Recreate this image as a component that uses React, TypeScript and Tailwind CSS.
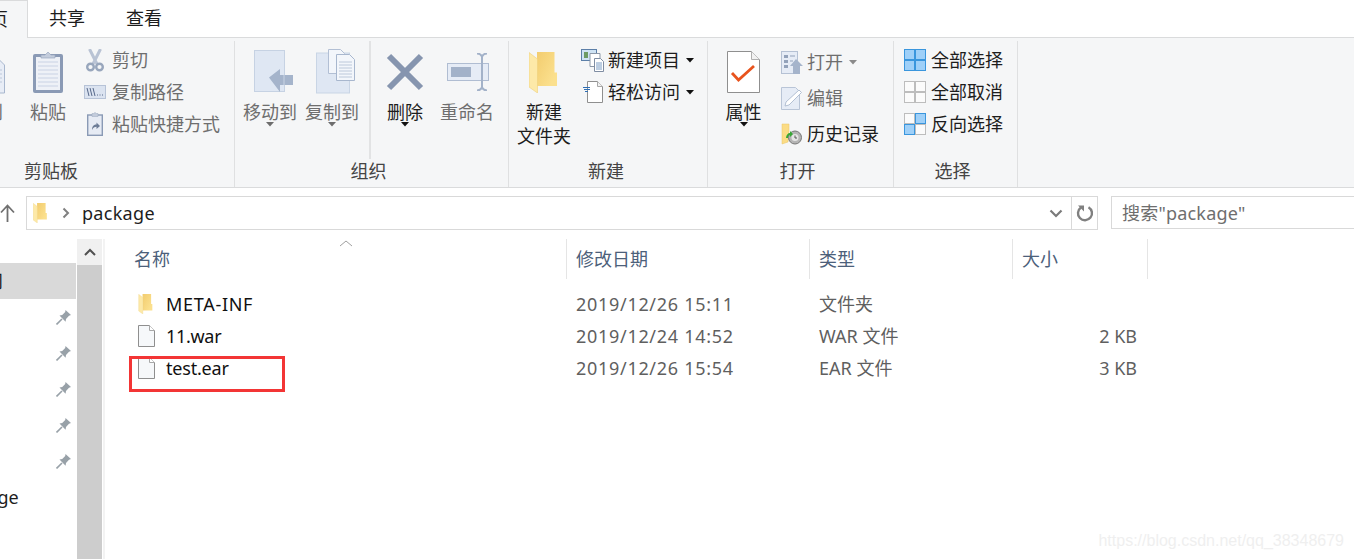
import { clsx } from 'clsx';

const FONT = '"Noto Sans","Noto Sans CJK SC",sans-serif';

const Caret = ({ color = '#6d6d6d' }: { color?: string }) => (
  <svg width="8" height="5" viewBox="0 0 8 5" className="block">
    <path d="M0 0h8L4 4.500z" fill={color} />
  </svg>
);

const FolderIcon = ({ w, h, id }: { w: number; h: number; id: string }) => (
  <svg width={w} height={h} viewBox="0 0 28 41" className="block">
    <defs>
      <linearGradient id={id} x1="0" y1="0" x2="1" y2="0.600">
        <stop offset="0" stopColor="#f0c766" />
        <stop offset="1" stopColor="#fbe08e" />
      </linearGradient>
    </defs>
    <path d="M0 0h25.500v20.500H28V34H8V0z" fill={`url(#${id})`} />
    <path d="M0 .500L8.500 7v34L0 35z" fill="#fde9a8" stroke="#efd07a" strokeWidth=".6" />
  </svg>
);

const FileIcon = () => (
  <svg width="17" height="22" viewBox="0 0 17 22" className="block">
    <path d="M.5.5h11l5 5v16H.5z" fill="#f6f8fa" stroke="#8f8f8f" />
    <path d="M11.500.5v5h5" fill="#fff" stroke="#a8a8a8" />
  </svg>
);

const PinIcon = () => (
  <svg width="16" height="16" viewBox="0 0 16 16" className="block">
    <path d="M.5 15.500L6 10" stroke="#98a1a8" strokeWidth="1.600" />
    <path d="M9.500 1l5.500 5-2 .7-3 3.300-.4 2.700L3.500 6.500l2.700-.5 3-3z" fill="#98a1a8" />
  </svg>
);

const PasteIcon = () => (
  <svg width="32" height="44" viewBox="0 0 32 44" className="block">
    <rect x="1" y="4" width="30" height="39" rx="2" fill="#8a9ab5" />
    <rect x="4" y="7" width="24" height="33" fill="#eef1f7" />
    <path d="M6 12h20M6 16h20M6 20h20M6 24h20M6 28h20M6 32h20M6 36h20" stroke="#c9d2e4" />
    <path d="M9 8V5h4l3-3 3 3h4v3z" fill="#c3ccdc" stroke="#9aa8bf" strokeWidth=".7" />
  </svg>
);

const ScissorsIcon = () => (
  <svg width="18" height="23" viewBox="0 0 18 23" className="block">
    <path d="M3.500 0l7.500 15M14.500 0L7 15" stroke="#b9c3d4" strokeWidth="3" />
    <circle cx="4.500" cy="18" r="3.300" fill="none" stroke="#98a6bc" strokeWidth="2.400" />
    <circle cx="13.500" cy="18" r="3.300" fill="none" stroke="#98a6bc" strokeWidth="2.400" />
  </svg>
);

const CopyPathIcon = () => (
  <svg width="22" height="14" viewBox="0 0 22 14" className="block">
    <rect x=".5" y=".5" width="21" height="13" fill="#dbe3f0" stroke="#b7c3d7" />
    <path d="M3 3l2 8M6 3l2 8M9 3l2 8" stroke="#56688a" strokeWidth="1" />
    <path d="M13 10h1M15.500 10h1M18 10h1" stroke="#56688a" />
  </svg>
);

const ShortcutIcon = () => (
  <svg width="16" height="24" viewBox="0 0 16 24" className="block">
    <rect x=".7" y="3" width="14.600" height="20.300" fill="#e6ebf4" stroke="#8a9ab5" strokeWidth="1.400" />
    <path d="M5 3V1.500h1.500L8 .5l1.500 1H11V3v1.500H5z" fill="#c3ccdc" stroke="#9aa8bf" strokeWidth=".5" />
    <path d="M5 18c0-4 2-5.500 4.500-5.500V10.500L13 14l-3.500 3v-2.200C7.500 14.800 6 16 5 18z" fill="#6c7c96" />
  </svg>
);

const MoveIcon = () => (
  <svg width="40" height="44" viewBox="0 0 40 44" className="block">
    <rect x=".5" y=".5" width="30" height="41" fill="#dfe7f3" stroke="#c6d2e3" />
    <path d="M15 27.500L26 19v6h13v10H26v7z" fill="#a5b4cb" />
    <path d="M30 25v10" stroke="#c9d4e4" />
  </svg>
);

const CopyToIcon = () => (
  <svg width="40" height="46" viewBox="0 0 40 46" className="block">
    <rect x=".5" y="4" width="33" height="40" fill="#dfe7f3" stroke="#c9d5e5" />
    <path d="M12.500.5h12l4 4v20h-16z" fill="#f3f6fb" stroke="#b2bfd4" />
    <path d="M20.500 5.500h13l5 5v21h-18z" fill="#f3f6fb" stroke="#a8b7ce" />
    <path d="M23 13h13M23 16h13M23 19h13M23 22h13M23 25h13M23 28h13" stroke="#bcc8da" />
  </svg>
);

const DeleteIcon = () => (
  <svg width="38" height="38" viewBox="0 0 38 38" className="block">
    <path d="M3 3l32 32M35 3L3 35" stroke="#8695af" strokeWidth="6" />
  </svg>
);

const RenameIcon = () => (
  <svg width="42" height="38" viewBox="0 0 42 38" className="block">
    <rect x=".5" y="10.500" width="41" height="17" fill="#e6ecf6" stroke="#b0bdd2" />
    <rect x="4" y="14" width="20" height="10" fill="#a3b2c9" />
    <path d="M30 .500c3 0 4 1 5 3 1-2 2-3 5-3M35 3v32M30 37.500c3 0 4-1 5-3 1 2 2 3 5 3" fill="none" stroke="#a3b2c9" strokeWidth="2" />
  </svg>
);

const NewItemIcon = () => (
  <svg width="23" height="23" viewBox="0 0 23 23" className="block">
    <rect x=".5" y=".5" width="15" height="11" fill="#cfe3f4" stroke="#5c7fa8" />
    <rect x="3" y="3" width="4" height="6" fill="#6d9b64" />
    <path d="M9 4.500h10v13H9z" fill="#fff" stroke="#8c98a8" />
    <path d="M13.500 9.500h6l3 3v10h-9z" fill="#fff" stroke="#7f8da3" />
    <path d="M15 14h6M15 16h6M15 18h6M15 20h6" stroke="#7b9cc4" />
  </svg>
);

const EasyAccessIcon = () => (
  <svg width="20" height="22" viewBox="0 0 20 22" className="block">
    <path d="M4.500.5h10l5 5v16h-15z" fill="#fff" stroke="#8f8f8f" />
    <path d="M14.500.5v5h5" fill="#f2f2f2" stroke="#a8a8a8" />
    <path d="M0 6.500h7M1 8.500h6M2 10.500h3" stroke="#2f6fb5" />
  </svg>
);

const PropertiesIcon = () => (
  <svg width="33" height="42" viewBox="0 0 33 42" className="block">
    <path d="M.5.5h24l8 8v33H.5z" fill="#fff" stroke="#8f8f8f" />
    <path d="M24.500.5v8h8" fill="#f2f2f2" stroke="#b0b0b0" />
    <path d="M5 22l6.500 7L27 15" fill="none" stroke="#e8531d" strokeWidth="2.800" />
  </svg>
);

const OpenIcon = () => (
  <svg width="22" height="23" viewBox="0 0 22 23" className="block">
    <rect x=".5" y=".5" width="16" height="22" fill="#e6ecf6" stroke="#b5c1d4" />
    <path d="M3 4h4v3H3zM3 9h4v3H3zM3 14h4v3H3z" fill="#93a2ba" />
    <path d="M9 5h5M9 10h3" stroke="#93a2ba" />
    <path d="M9 15l6-7 7 7h-3v8h-7v-8z" fill="#a5b4cb" />
  </svg>
);

const EditIcon = () => (
  <svg width="21" height="23" viewBox="0 0 21 23" className="block">
    <path d="M.5.5h14l4 4v18H.5z" fill="#e6ecf6" stroke="#b9c5d7" />
    <path d="M4 19l1-4L18 3l2.500 2.500L8 18z" fill="#fff" stroke="#b3c0d3" />
  </svg>
);

const HistoryIcon = () => (
  <svg width="21" height="22" viewBox="0 0 21 22" className="block">
    <path d="M1 1h7v7l-1 11-6 2z" fill="#fbdc85" stroke="#e8c465" strokeWidth=".5" />
    <circle cx="14" cy="14.500" r="6.500" fill="#b4b4b4" stroke="#777" />
    <circle cx="14" cy="14.500" r="3.500" fill="#e4e4e4" />
    <path d="M14 12.500v2.500h2" stroke="#555" fill="none" />
    <path d="M5 15c0-3 2-5 4-5v-2l3 3-3 3v-2c-1 0-2 1-2 3z" fill="#37a735" />
  </svg>
);

const SelectIcon = ({ on }: { on: [boolean, boolean, boolean, boolean] }) => (
  <svg width="22" height="22" viewBox="0 0 22 22" className="block">
    {[[.5, .5], [11.500, .5], [.5, 11.500], [11.500, 11.500]].map(([x, y], i) => (
      <rect
        key={i}
        x={x}
        y={y}
        width="10"
        height="10"
        fill={on[i] ? '#9fd0f8' : '#fbfbfb'}
        stroke={on[i] ? '#3a96dd' : '#bdbdbd'}
      />
    ))}
  </svg>
);

const SmallAction = ({ icon, label, dim, caret, className }: { icon: React.ReactNode; label: string; dim?: boolean; caret?: string; className?: string }) => (
  <div className={clsx('flex items-center', className ?? 'h-8')}>
    <div className="flex w-[27px] shrink-0 justify-center">{icon}</div>
    <span className={clsx('text-[18px] leading-none', dim ? 'text-[#6e6e6e]' : 'text-[#1d1d1d]')}>{label}</span>
    {caret && (
      <span className="ml-[6px]">
        <Caret color={caret} />
      </span>
    )}
  </div>
);

const BigAction = ({ icon, label, dim, caret, className, iconClass }: { icon: React.ReactNode; label: string; dim?: boolean; caret?: string; className: string; iconClass?: string }) => (
  <div className={clsx('flex shrink-0 flex-col items-center', className)}>
    <div className={clsx('-mb-[3px] flex h-[62px] items-center justify-center', iconClass)}>{icon}</div>
    <span className={clsx('text-center text-[18px] leading-6 whitespace-pre-line', dim ? 'text-[#6e6e6e]' : 'text-[#1d1d1d]')}>{label}</span>
    {caret && (
      <span className="-mt-[2px]">
        <Caret color={caret} />
      </span>
    )}
  </div>
);

const Group = ({ className, labelClass, label, children }: { className: string; labelClass: string; label: string; children: React.ReactNode }) => (
  <div className={clsx('flex shrink-0 flex-col border-r border-[#dfe0e1]', className)}>
    <div className="flex h-[118px]">{children}</div>
    <div className={clsx('text-center text-[18px] leading-6 text-[#444]', labelClass)}>{label}</div>
  </div>
);

const Ribbon = () => (
  <div className="flex h-[150px] border-b border-[#dadbdc] bg-[#f5f6f7] pt-[3px]">
    <Group className="w-[235px]" labelClass="pr-[132px]" label="剪贴板">
      <div className="w-[30px] shrink-0 overflow-hidden">
        <div className="-mb-[3px] -ml-[15px] flex h-[62px] items-center">
          <svg width="20" height="44" viewBox="0 0 20 44" className="block">
            <path d="M.5 8h12l7 7v28H.5z" fill="#e8edf6" stroke="#a8b7ce" />
            <path d="M3 20h14M3 24h14M3 28h14M3 32h14" stroke="#bcc8da" />
          </svg>
        </div>
        <span className="-ml-[15px] block text-[18px] leading-6 text-[#6e6e6e]">到</span>
      </div>
      <BigAction className="w-9" icon={<PasteIcon />} label="粘贴" dim />
      <div className="ml-[15px] flex flex-col pt-[3px] [&>div>div]:mr-[4px]">
        <SmallAction icon={<ScissorsIcon />} label="剪切" dim />
        <SmallAction icon={<CopyPathIcon />} label="复制路径" dim />
        <SmallAction icon={<ShortcutIcon />} label="粘贴快捷方式" dim />
      </div>
    </Group>
    <Group className="w-[274px]" labelClass="pr-[6px]" label="组织">
      <div className="flex w-[136px] justify-center gap-[8px] border-r-2 border-[#e2e3e4] pr-[2px]">
        <BigAction className="w-[54px]" iconClass="ml-[8px]" icon={<MoveIcon />} label="移动到" dim caret="#6d6d6d" />
        <BigAction className="w-[54px]" iconClass="ml-[8px]" icon={<CopyToIcon />} label="复制到" dim caret="#6d6d6d" />
      </div>
      <div className="flex pl-[7px]">
        <BigAction className="w-[54px]" icon={<DeleteIcon />} label="删除" caret="#111" />
        <BigAction className="w-[70px]" iconClass="ml-[2px]" icon={<RenameIcon />} label="重命名" dim />
      </div>
    </Group>
    <Group className="w-[199px]" labelClass="pr-[4px]" label="新建">
      <BigAction className="w-[70px]" iconClass="mr-[2px]" icon={<FolderIcon id="fold-big" w={28} h={41} />} label={'新建\n文件夹'} />
      <div className="flex flex-col pt-[3px] [&>div>div]:mr-[2px]">
        <SmallAction icon={<NewItemIcon />} label="新建项目" caret="#111" />
        <SmallAction icon={<EasyAccessIcon />} label="轻松访问" caret="#111" />
      </div>
    </Group>
    <Group className="w-[186px]" labelClass="pr-[6px]" label="打开">
      <BigAction className="w-[71px]" icon={<PropertiesIcon />} label="属性" caret="#111" />
      <div className="-ml-[1px] flex flex-col pt-[3px] [&>div>div]:mr-[2px]">
        <SmallAction className="h-9" icon={<OpenIcon />} label="打开" dim caret="#8a8a8a" />
        <SmallAction className="h-9" icon={<EditIcon />} label="编辑" dim />
        <SmallAction className="h-9" icon={<HistoryIcon />} label="历史记录" />
      </div>
    </Group>
    <Group className="w-[124px]" labelClass="pr-[6px]" label="选择">
      <div className="flex flex-col pt-[3px] pl-[7px] [&>div>div]:mr-[3px]">
        <SmallAction icon={<SelectIcon on={[true, true, true, true]} />} label="全部选择" />
        <SmallAction icon={<SelectIcon on={[false, false, false, false]} />} label="全部取消" />
        <SmallAction icon={<SelectIcon on={[false, true, true, false]} />} label="反向选择" />
      </div>
    </Group>
  </div>
);

const Tabs = () => (
  <div className="flex h-[38px] border-b border-[#dadbdc] bg-white text-[18px] leading-none text-[#1d1d1d]">
    <div className="-mb-[1px] flex h-[38px] w-[28px] justify-end overflow-hidden border-t border-r border-[#dadbdc] bg-[#f5f6f7] pt-[9px] pr-[19px]">
      <span className="shrink-0">页</span>
    </div>
    <div className="ml-[21px] pt-[9px]">共享</div>
    <div className="ml-[41px] pt-[9px]">查看</div>
  </div>
);

const AddressBar = () => (
  <div className="flex h-[48px] items-start bg-white pt-2 text-[18px]">
    <div className="flex h-[33px] w-[26px] items-center">
      <svg width="15" height="18" viewBox="0 0 15 18" className="block">
        <path d="M7.500 18V2M1 8.500l6.500-7 6.500 7" fill="none" stroke="#707070" strokeWidth="1.800" />
      </svg>
    </div>
    <div className="flex h-[34px] w-[1046px] items-center border border-[#d9d9d9]">
      <div className="ml-[6px]">
        <FolderIcon id="fold-addr" w={14} h={20} />
      </div>
      <svg width="8" height="12" viewBox="0 0 8 12" className="ml-[15px] block">
        <path d="M1.500 1.500L6 6l-4.500 4.500" fill="none" stroke="#808080" strokeWidth="2" />
      </svg>
      <span className="ml-[12px] leading-none tracking-[0.3px] text-[#1d1d1d]">package</span>
      <svg width="14" height="9" viewBox="0 0 14 9" className="mr-[8px] ml-auto block">
        <path d="M1.500 1.500L7 7l5.500-5.500" fill="none" stroke="#7a7a7a" strokeWidth="2.200" />
      </svg>
    </div>
    <div className="flex h-[34px] w-[26px] items-center justify-center border border-l-0 border-[#d9d9d9]">
      <svg width="18" height="18" viewBox="0 0 18 18" className="block">
        <path d="M5 3.500a7 7 0 1 0 7.500-.3" fill="none" stroke="#808080" strokeWidth="2.400" />
        <path d="M2 1.500h6v6z" fill="#808080" />
      </svg>
    </div>
    <div className="ml-[13px] flex h-[33px] flex-1 items-center border border-r-0 border-[#d9d9d9] pl-[10px] leading-none tracking-[0.2px] text-[#6e6e6e]">
      搜索"package"
    </div>
  </div>
);

const Sidebar = () => (
  <div className="relative h-full w-[77px] shrink-0 overflow-hidden bg-white">
    <div className="mt-6 mr-[1px] flex h-9 items-center justify-end overflow-hidden bg-[#d9d9d9] pr-[73px] text-[18px] text-[#1d1d1d]">
      <span className="shrink-0">问</span>
    </div>
    <div className="flex flex-col items-end pr-[5px]">
      {[0, 1, 2, 3, 4].map((i) => (
        <div key={i} className="flex h-9 items-center">
          <PinIcon />
        </div>
      ))}
    </div>
    <div className="mt-[6px] -ml-[52px] text-[18px] leading-6 text-[#1d1d1d]">package</div>
  </div>
);

const COLUMNS = [
  { label: '名称', className: 'w-[433px]' },
  { label: '修改日期', className: 'w-[243px] pl-[9px]' },
  { label: '类型', className: 'w-[203px] pl-[9px]' },
  { label: '大小', className: 'w-[135px] pl-[9px]' }
];

const FILES = [
  { icon: <FolderIcon id="fold-row" w={15} h={20} />, name: 'META-INF', nameClass: 'tracking-[0.7px]', date: '2019/12/26 15:11', type: '文件夹', size: '' },
  { icon: <FileIcon />, name: '11.war', nameClass: 'tracking-[-0.3px]', date: '2019/12/24 14:52', type: 'WAR 文件', size: '2 KB' },
  { icon: <FileIcon />, name: 'test.ear', nameClass: 'tracking-[-0.2px]', date: '2019/12/26 15:54', type: 'EAR 文件', size: '3 KB' }
];

const FileList = () => (
  <div className="relative min-w-0 flex-1 bg-white pl-[29px] text-[18px]">
    <svg width="14" height="7" viewBox="0 0 14 7" className="absolute top-[1px] left-[234px] block">
      <path d="M1 6l6-5 6 5" fill="none" stroke="#a0a0a0" />
    </svg>
    <div className="flex h-[41px]">
      {COLUMNS.map((c) => (
        <div
          key={c.label}
          className={clsx('flex h-[40px] shrink-0 items-center border-r border-[#e5e5e5] leading-none text-[#4c607a]', c.className)}>
          {c.label}
        </div>
      ))}
    </div>
    <div className="pt-2">
      {FILES.map((f) => (
        <div key={f.name} className="flex h-8 items-center leading-none">
          <div className="flex w-[433px] shrink-0 items-center">
            <div className="ml-[4px] flex w-[28px] justify-start">{f.icon}</div>
            <span className={clsx('text-[#111]', f.nameClass)}>{f.name}</span>
          </div>
          <div className="w-[243px] shrink-0 pl-[9px] tracking-[0.7px] text-[#5f5f5f]">{f.date}</div>
          <div className="w-[203px] shrink-0 pl-[9px] text-[#5f5f5f]">{f.type}</div>
          <div className="w-[124px] shrink-0 text-right text-[#5f5f5f]">{f.size}</div>
        </div>
      ))}
    </div>
  </div>
);

export default function App() {
  return (
    <div className="relative h-[559px] w-[1354px] overflow-hidden bg-white" style={{ fontFamily: FONT }}>
      <Tabs />
      <Ribbon />
      <AddressBar />
      <div className="flex h-[323px] pt-[3px]">
        <Sidebar />
        <div className="flex w-[25px] shrink-0 flex-col">
          <div className="flex h-[26px] items-center justify-center bg-[#f0f0f0]">
            <svg width="12" height="8" viewBox="0 0 12 8" className="block">
              <path d="M1 7l5-5 5 5" fill="none" stroke="#505050" strokeWidth="2" />
            </svg>
          </div>
          <div className="flex-1 bg-[#cdcdcd]" />
        </div>
        <div className="ml-[1px] w-[2px] shrink-0 bg-[#f3f3f3]" />
        <FileList />
      </div>
      <div className="absolute top-[356px] left-[129px] h-[36px] w-[156px] border-[3px] border-[#f33535]" />
      <div className="absolute top-[531px] right-[10px] font-['Liberation_Sans'] text-[16px] leading-5 text-[#efefef]">https://blog.csdn.net/qq_38348679</div>
    </div>
  );
}
